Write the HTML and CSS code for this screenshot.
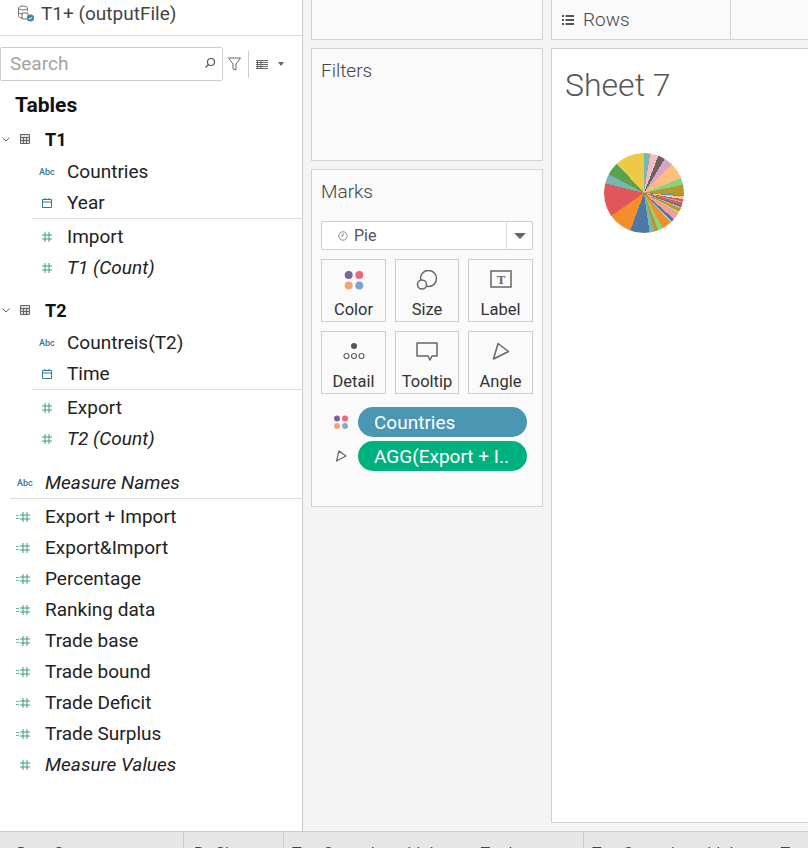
FILE: index.html
```html
<!DOCTYPE html>
<html lang="en">
<head>
  <meta charset="UTF-8" />
  <title>Sheet 7</title>
  <link rel="stylesheet" href="styles.css">
</head>
<body>
  <svg class="defs" width="0" height="0">
    <symbol id="num" viewBox="0 0 10 10">
      <path d="M3 0v10M7 0v10M0 3h10M0 7h10" fill="none" stroke="#3f9b7f"/>
    </symbol>
    <symbol id="calcnum" viewBox="0 0 14 10">
      <path d="M7 0v10M11 0v10M4 3h10M4 7h10" fill="none" stroke="#3f9b7f"/>
      <path d="M0 3.500h3M0 6.500h3" fill="none" stroke="#6bb59e"/>
    </symbol>
  </svg>

  <div class="workspace">
    <aside class="sidebar">
      <div class="source">
        <svg class="source-icon" width="18" height="18" viewBox="0 0 18 18" fill="none" stroke="#777">
          <ellipse cx="6" cy="3" rx="4.500" ry="2"/>
          <path d="M1.500 3v8c0 1 1.500 2 4.500 2M10.500 3v3"/>
          <path d="M1.500 7c0 1 2 2 4.500 2M5 8h6v6H5z"/>
          <circle cx="13.500" cy="13" r="3.500" fill="#3d84a8" stroke="none"/>
          <path d="M11.800 13l1.300 1.300 2-2.300" stroke="#fff"/>
        </svg>
        <span>T1+ (outputFile)</span>
      </div>

      <div class="search-row">
        <div class="search">
          <span class="search-text">Search</span>
          <svg width="12" height="12" viewBox="0 0 12 12" fill="none" stroke="#555" stroke-width="1.200">
            <circle cx="7" cy="5" r="3.500"/>
            <path d="M4.500 7.500L1.500 10.500"/>
          </svg>
        </div>
        <svg class="funnel" width="13" height="14" viewBox="0 0 13 14" fill="none" stroke="#666">
          <path d="M.5 1h12L8 7v6l-3-1V7z"/>
        </svg>
        <span class="search-sep"></span>
        <svg class="list-icon" width="12" height="9" viewBox="0 0 12 9" stroke="#666">
          <path d="M0 .5h12M0 2.500h12M0 4.500h12M0 6.500h12M0 8.500h12M1.500 0v9M5 0v9" stroke-width="1"/>
        </svg>
        <span class="caret"></span>
      </div>

      <h2 class="tables-title">Tables</h2>

      <section class="table-group">
        <div class="table-head">
          <svg class="chevron" width="8" height="5" viewBox="0 0 8 5" fill="none" stroke="#666"><path d="M.5.5L4 4 7.500.5"/></svg>
          <svg class="grid-icon" width="10" height="10" viewBox="0 0 10 10" fill="#ddd" stroke="#666"><path d="M.5.5h9v9h-9zM.5 3.500h9M.5 6.500h9M3.500 3.500v6M6.500 3.500v6"/></svg>
          <span>T1</span>
        </div>
        <div class="field"><span class="abc">Abc</span><span>Countries</span></div>
        <div class="field"><svg class="cal" width="10" height="10" viewBox="0 0 10 10" fill="none" stroke="#2b7a99"><path d="M.5 1.500h9v8h-9zM.5 4h9M3 0v2M7 0v2"/></svg><span>Year</span></div>
        <div class="divider"></div>
        <div class="field"><svg class="hash" width="10" height="10"><use href="#num"/></svg><span>Import</span></div>
        <div class="field calc"><svg class="hash" width="10" height="10"><use href="#num"/></svg><span>T1 (Count)</span></div>
      </section>

      <section class="table-group">
        <div class="table-head">
          <svg class="chevron" width="8" height="5" viewBox="0 0 8 5" fill="none" stroke="#666"><path d="M.5.5L4 4 7.500.5"/></svg>
          <svg class="grid-icon" width="10" height="10" viewBox="0 0 10 10" fill="#ddd" stroke="#666"><path d="M.5.5h9v9h-9zM.5 3.500h9M.5 6.500h9M3.500 3.500v6M6.500 3.500v6"/></svg>
          <span>T2</span>
        </div>
        <div class="field"><span class="abc">Abc</span><span>Countreis(T2)</span></div>
        <div class="field"><svg class="cal" width="10" height="10" viewBox="0 0 10 10" fill="none" stroke="#2b7a99"><path d="M.5 1.500h9v8h-9zM.5 4h9M3 0v2M7 0v2"/></svg><span>Time</span></div>
        <div class="divider"></div>
        <div class="field"><svg class="hash" width="10" height="10"><use href="#num"/></svg><span>Export</span></div>
        <div class="field calc"><svg class="hash" width="10" height="10"><use href="#num"/></svg><span>T2 (Count)</span></div>
      </section>

      <section class="loose">
        <div class="field calc top"><span class="abc">Abc</span><span>Measure Names</span></div>
        <div class="divider wide"></div>
        <div class="field top"><svg class="hash eq" width="14" height="10"><use href="#calcnum"/></svg><span>Export + Import</span></div>
        <div class="field top"><svg class="hash eq" width="14" height="10"><use href="#calcnum"/></svg><span>Export&amp;Import</span></div>
        <div class="field top"><svg class="hash eq" width="14" height="10"><use href="#calcnum"/></svg><span>Percentage</span></div>
        <div class="field top"><svg class="hash eq" width="14" height="10"><use href="#calcnum"/></svg><span>Ranking data</span></div>
        <div class="field top"><svg class="hash eq" width="14" height="10"><use href="#calcnum"/></svg><span>Trade base</span></div>
        <div class="field top"><svg class="hash eq" width="14" height="10"><use href="#calcnum"/></svg><span>Trade bound</span></div>
        <div class="field top"><svg class="hash eq" width="14" height="10"><use href="#calcnum"/></svg><span>Trade Deficit</span></div>
        <div class="field top"><svg class="hash eq" width="14" height="10"><use href="#calcnum"/></svg><span>Trade Surplus</span></div>
        <div class="field top calc"><svg class="hash solo" width="10" height="10"><use href="#num"/></svg><span>Measure Values</span></div>
      </section>
    </aside>

    <div class="cards">
      <div class="card pages"></div>
      <div class="card filters"><h3>Filters</h3></div>
      <div class="card marks">
        <h3>Marks</h3>
        <div class="mark-type">
          <svg width="10" height="10" viewBox="0 0 10 10" fill="none" stroke="#888"><circle cx="5" cy="5" r="4.200"/><path d="M5 2.500V5H2.800"/></svg>
          <span class="mark-name">Pie</span>
          <span class="mark-drop"><span class="caret big"></span></span>
        </div>
        <div class="mark-grid">
          <div class="mark-btn">
            <svg width="22" height="20" viewBox="0 0 22 20">
              <circle cx="5.700" cy="5" r="4" fill="#7b6694"/><circle cx="16.300" cy="5" r="4" fill="#f0667f"/>
              <circle cx="5.700" cy="15.500" r="4" fill="#f2a477"/><circle cx="16.300" cy="15.500" r="4" fill="#7fa5cf"/>
            </svg>
            <span>Color</span>
          </div>
          <div class="mark-btn">
            <svg width="24" height="20" viewBox="0 0 24 20" fill="none" stroke="#666" stroke-width="1.500">
              <circle cx="13.500" cy="8.500" r="8"/><circle cx="7" cy="14.500" r="4.500" fill="#fafafa"/>
            </svg>
            <span>Size</span>
          </div>
          <div class="mark-btn">
            <svg width="22" height="20" viewBox="0 0 22 20" fill="none" stroke="#666" stroke-width="1.500">
              <rect x="1" y="1" width="20" height="16"/>
              <text class="label-t" x="11" y="13.500" text-anchor="middle">T</text>
            </svg>
            <span>Label</span>
          </div>
          <div class="mark-btn">
            <svg width="24" height="20" viewBox="0 0 24 20" fill="none" stroke="#666" stroke-width="1.200">
              <circle cx="12" cy="4" r="3" fill="#555" stroke="none"/>
              <circle cx="4.500" cy="14" r="2.500"/><circle cx="12" cy="14" r="2.500"/><circle cx="19.500" cy="14" r="2.500"/>
            </svg>
            <span>Detail</span>
          </div>
          <div class="mark-btn">
            <svg width="22" height="20" viewBox="0 0 22 20" fill="none" stroke="#666" stroke-width="1.500">
              <path d="M1 1h20v13h-5l-2 4-2-4H1z" stroke-linejoin="round"/>
            </svg>
            <span>Tooltip</span>
          </div>
          <div class="mark-btn">
            <svg width="18" height="20" viewBox="0 0 18 20" fill="none" stroke="#666" stroke-width="1.500">
              <path d="M6 1.500L16.500 9.500 1.500 17z" stroke-linejoin="round"/>
            </svg>
            <span>Angle</span>
          </div>
        </div>
        <div class="pill-row">
          <svg width="15" height="14" viewBox="0 0 15 14">
            <circle cx="3" cy="3.500" r="3" fill="#7b6694"/><circle cx="11" cy="3.500" r="3" fill="#f0667f"/>
            <circle cx="3" cy="11" r="3" fill="#f2a477"/><circle cx="11" cy="11" r="3" fill="#8fa8cc"/>
          </svg>
          <span class="pill blue">Countries</span>
        </div>
        <div class="pill-row">
          <svg width="15" height="14" viewBox="0 0 15 14" fill="none" stroke="#666" stroke-width="1.200">
            <path d="M5 2L12 7 2.500 12z" stroke-linejoin="round"/>
          </svg>
          <span class="pill green">AGG(Export + I..</span>
        </div>
      </div>
    </div>

    <div class="view-col">
      <div class="shelf">
        <div class="shelf-label">
          <svg width="12" height="10" viewBox="0 0 12 10" fill="#555">
            <path d="M0 0h2v2H0zM3.500 0H12v2H3.500zM0 4h2v2H0zM3.500 4H12v2H3.500zM0 8h2v2H0zM3.500 8H12v2H3.500z"/>
          </svg>
          <span>Rows</span>
        </div>
      </div>
      <div class="view">
        <h1 class="sheet-title">Sheet 7</h1>
        <div class="pie"></div>
      </div>
    </div>
  </div>

  <div class="tabs">
    <span class="tab t1">Data Source</span>
    <span class="tab t2">By Share</span>
    <span class="tab t3">Top Countries with Import Trade</span>
    <span class="tab t4">Top Countries with Import Trade</span>
  </div>
</body>
</html>
```
FILE: styles.css
```css
* {
  box-sizing: border-box;
}
html, body {
  height: 100%;
}
body {
  margin: 0;
  width: 808px;
  height: 848px;
  overflow: hidden;
  display: flex;
  flex-direction: column;
  background: #f4f4f4;
  color: #222;
  font-family: 'Roboto', 'Liberation Sans', sans-serif;
  font-size: 19px;
}
.defs {
  display: none;
}
.workspace {
  display: flex;
  height: 831px;
  flex-shrink: 0;
}

/* left data pane */
.sidebar {
  width: 303px;
  flex-shrink: 0;
  background: #fff;
  border-right: 1px solid #ccc;
}
.source {
  height: 36px;
  padding: 4px 0 0 17px;
  display: flex;
  align-items: flex-start;
  gap: 6px;
  border-bottom: 1px solid #ddd;
  color: #444;
  line-height: 20px;
}
.source-icon {
  flex-shrink: 0;
  margin-top: 1px;
}
.search-row {
  display: flex;
  align-items: center;
  margin-top: 11px;
  height: 34px;
}
.search {
  width: 223px;
  height: 34px;
  border: 1px solid #ccc;
  border-radius: 2px;
  display: flex;
  align-items: center;
  justify-content: space-between;
  padding: 0 6px 2px 9px;
}
.search-text {
  color: #a3a3a3;
}
.funnel {
  margin-left: 5px;
}
.search-sep {
  width: 1px;
  height: 27px;
  background: #ccc;
  margin: 0 7px;
}
.caret {
  width: 0;
  height: 0;
  margin-left: 10px;
  border-left: 3.500px solid transparent;
  border-right: 3.500px solid transparent;
  border-top: 4px solid #666;
}
.caret.big {
  margin: 0;
  border-left-width: 6px;
  border-right-width: 6px;
  border-top-width: 6px;
}
.tables-title {
  margin: 10px 0 0 15px;
  font-size: 21px;
  font-weight: 700;
  color: #111;
  line-height: 28px;
  height: 33px;
}
.table-group {
  margin-bottom: 12px;
}
.table-head {
  display: flex;
  align-items: center;
  height: 32px;
  padding: 0 0 2px 2px;
  font-size: 18px;
  font-weight: 700;
  color: #111;
}
.chevron {
  margin-right: 10px;
}
.grid-icon {
  margin-right: 15px;
}
.field {
  display: flex;
  align-items: center;
  height: 31px;
  padding-left: 67px;
  color: #222;
  position: relative;
}
.field.top {
  padding-left: 45px;
}
.calc {
  font-style: italic;
}
.abc {
  position: absolute;
  left: 39px;
  font-size: 9px;
  font-weight: 500;
  font-style: normal;
  color: #2f7799;
}
.field.top .abc {
  left: 17px;
}
.cal {
  position: absolute;
  left: 42px;
}
.hash {
  position: absolute;
  left: 42px;
}
.hash.eq {
  left: 16px;
}
.hash.solo {
  left: 20px;
}
.divider {
  height: 1px;
  margin: 0 0 2px 32px;
  background: #ddd;
}
.divider.wide {
  margin-left: 10px;
}
.loose {
  padding-top: 1px;
}

/* middle column */
.cards {
  width: 232px;
  margin: 0 8px;
  flex-shrink: 0;
}
.card {
  background: #fafafa;
  border: 1px solid #d2d2d2;
  margin-bottom: 8px;
}
.card h3 {
  margin: 1px 0 0;
  font-size: 19px;
  font-weight: 300;
  color: #444;
  line-height: 24px;
}
.pages {
  height: 40px;
  border-top: 0;
}
.filters {
  height: 113px;
  padding: 9px;
}
.marks {
  height: 338px;
  padding: 9px;
}
.mark-type {
  display: flex;
  align-items: center;
  height: 29px;
  margin-top: 17px;
  padding-left: 16px;
  border: 1px solid #ccc;
  border-radius: 2px;
  background: #fff;
  color: #555;
  font-size: 16px;
}
.mark-name {
  margin-left: 6px;
  flex: 1;
}
.mark-drop {
  width: 26px;
  height: 100%;
  border-left: 1px solid #ddd;
  display: flex;
  align-items: center;
  justify-content: center;
}
.mark-grid {
  display: grid;
  grid-template-columns: 65px 64px 65px;
  grid-auto-rows: 63px;
  column-gap: 9px;
  row-gap: 9px;
  margin-top: 9px;
}
.mark-btn {
  border: 1px solid #ccc;
  display: flex;
  flex-direction: column;
  align-items: center;
  justify-content: space-between;
  padding: 10px 0 1px;
  font-size: 16.500px;
  color: #333;
  line-height: 20px;
  white-space: nowrap;
}
.label-t {
  font-family: 'Liberation Serif', serif;
  font-size: 13px;
  font-weight: 700;
  fill: #666;
  stroke: none;
}
.pill-row {
  display: flex;
  align-items: center;
  gap: 9px;
  height: 30px;
  margin-bottom: 4px;
  padding-left: 13px;
}
.mark-grid + .pill-row {
  margin-top: 13px;
}
.pill {
  width: 169px;
  height: 30px;
  border-radius: 15px;
  padding-left: 16px;
  color: #fff;
  line-height: 31px;
  white-space: nowrap;
}
.pill.blue {
  background: #4a96b3;
}
.pill.green {
  background: #00b180;
}

/* right column */
.view-col {
  flex: 1;
  min-width: 0;
  display: flex;
  flex-direction: column;
}
.shelf {
  height: 40px;
  margin-bottom: 8px;
  background: #fafafa;
  border: 1px solid #d2d2d2;
  border-top: 0;
  border-right: 0;
}
.shelf-label {
  width: 179px;
  height: 100%;
  padding-left: 10px;
  display: flex;
  align-items: center;
  gap: 9px;
  border-right: 1px solid #d2d2d2;
  color: #444;
  font-size: 19px;
  font-weight: 300;
}
.view {
  height: 775px;
  background: #fff;
  border: 1px solid #d2d2d2;
  border-right: 0;
}
.sheet-title {
  margin: 18px 0 0 13px;
  font-size: 32px;
  font-weight: 300;
  line-height: 36px;
  color: #555;
}
.pie {
  width: 80px;
  height: 80px;
  margin: 50px 0 0 52px;
  border-radius: 50%;
  background: conic-gradient(
    #7cb6b0 0deg 9deg, #f1ce63 9deg 10deg, #f6b8cc 10deg 21deg, #6f625a 21deg 31deg,
    #d4a6c8 31deg 44deg, #ffbe7d 44deg 68deg, #8cd17d 68deg 78deg, #b6992d 78deg 93deg,
    #499894 93deg 95deg, #f1ce63 95deg 97deg, #fabfd2 97deg 99deg, #e15759 99deg 102deg,
    #86bcb6 102deg 104deg, #e15759 104deg 108deg, #79706e 108deg 111deg, #d4a6c8 111deg 113deg,
    #b6992d 113deg 118deg, #f1ce63 118deg 120deg, #bab0ac 120deg 123deg, #ff9d9a 123deg 131deg,
    #4e79a7 131deg 136deg, #a0cbe8 136deg 138deg, #f28e2b 138deg 152deg, #8cd17d 152deg 159deg,
    #b6992d 159deg 165deg, #76b7b2 165deg 172deg, #4e79a7 172deg 200deg, #f28e2b 200deg 235deg,
    #e15759 235deg 284deg, #76b7b2 284deg 298deg, #59a14f 298deg 317deg, #edc948 317deg 360deg
  );
}

/* bottom tabs */
.tabs {
  height: 17px;
  flex-shrink: 0;
  display: flex;
  background: #e6e6e6;
  border-top: 1px solid #ccc;
  overflow: hidden;
  color: #444;
  font-size: 16px;
  line-height: 20px;
}
.tab {
  padding: 12px 0 0 17px;
  border-right: 1px solid #ccc;
  white-space: nowrap;
  overflow: hidden;
  flex-shrink: 0;
}
.t1 {
  width: 184px;
}
.t2 {
  width: 100px;
  padding-left: 10px;
}
.t3 {
  width: 300px;
  padding-left: 8px;
}
.t4 {
  width: 300px;
  padding-left: 8px;
  border-right: 0;
}
```
